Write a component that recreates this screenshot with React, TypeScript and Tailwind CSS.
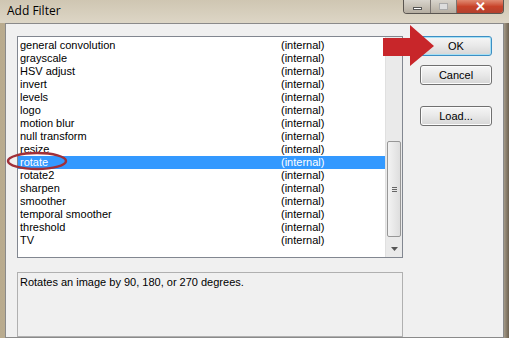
const FILTERS = [
  'general convolution',
  'grayscale',
  'HSV adjust',
  'invert',
  'levels',
  'logo',
  'motion blur',
  'null transform',
  'resize',
  'rotate',
  'rotate2',
  'sharpen',
  'smoother',
  'temporal smoother',
  'threshold',
  'TV',
]

const SELECTED = 'rotate'

function WinButton({ label, primary }: { label: string; primary?: boolean }) {
  return (
    <button
      className={`block w-[72px] h-[20px] rounded-[3px] border text-[11px] text-black bg-gradient-to-b from-[#f6f6f6] via-[#e8e8e8] to-[#d6d6d6] ${
        primary ? 'border-[#3c8fc4] shadow-[inset_0_0_0_1px_#a6e0f5]' : 'border-[#707070] shadow-[inset_0_0_0_1px_#fcfcfc]'
      }`}
    >
      {label}
    </button>
  )
}

export default function App() {
  return (
    <div
      className="relative w-[509px] h-[338px] overflow-hidden bg-gradient-to-r from-[#b9ab8e] via-[#d9d2c2] to-[#c9bea5]"
      style={{ fontFamily: '"Liberation Sans", Arial, sans-serif' }}
    >
      {/* title bar */}
      <div className="relative h-[23px] flex items-start">
        <div className="absolute inset-x-0 top-0 h-[23px] bg-gradient-to-b from-[#cfc6b2] to-[#ddd6c6]" />
        <span
          className="relative ml-[7px] mt-[2px] text-[12px] text-black"
          style={{ fontFamily: '"Open Sans", "Noto Sans", sans-serif' }}
        >
          Add Filter
        </span>
        <div className="relative ml-auto mr-[5px] flex h-[14px] rounded-b-[4px] border border-t-0 border-[#5a5550] overflow-hidden">
          <div className="w-[27px] flex items-center justify-center bg-gradient-to-b from-[#d8d4cc] to-[#b5ada0] border-r border-[#7a7470]">
            <div className="w-[9px] h-[3px] mt-[4px] bg-white border border-[#555]" />
          </div>
          <div className="w-[26px] flex items-center justify-center bg-gradient-to-b from-[#d8d4cc] to-[#b5ada0] border-r border-[#7a7470]">
            <div className="w-[9px] h-[7px] border border-[#aaa] bg-[#ddd]" />
          </div>
          <div className="w-[46px] flex items-center justify-center bg-gradient-to-b from-[#e08a72] via-[#c8432a] to-[#b3402d] text-white text-[13px] font-bold leading-none">
            ✕
          </div>
        </div>
      </div>

      {/* client area */}
      <div className="mx-[5px] h-[315px] bg-[#f0f0f0] border border-[#8a8a8a] flex pl-[11px] pt-[12px]">
        <div className="flex flex-col w-[386px]">
          <div className="h-[222px] bg-white border border-[#828790] flex">
            <div className="flex-1 pt-[2px]">
              {FILTERS.map(f => {
                const sel = f === SELECTED
                return (
                  <div
                    key={f}
                    className={`flex h-[13px] items-center text-[11px] leading-[13px] ${
                      sel ? 'bg-[#3399ff] text-white' : 'text-black'
                    }`}
                  >
                    <span className="w-[263px] pl-[2px]">{f}</span>
                    <span>(internal)</span>
                  </div>
                )
              })}
            </div>
            <div className="w-[17px] bg-[#eaeaea] border-l border-[#e0e0e0] flex flex-col">
              <div className="h-[16px]" />
              <div className="flex-1 pt-[88px] px-[1px]">
                <div className="h-[96px] rounded-[2px] border border-[#979797] bg-gradient-to-r from-[#f3f3f3] to-[#dedede] flex items-center justify-center">
                  <div className="flex flex-col gap-[1px]">
                    <div className="w-[5px] h-px bg-[#666]" />
                    <div className="w-[5px] h-px bg-[#666]" />
                    <div className="w-[5px] h-px bg-[#666]" />
                  </div>
                </div>
              </div>
              <div className="h-[17px] flex items-center justify-center">
                <svg width="7" height="4" viewBox="0 0 7 4">
                  <polygon points="0,0 7,0 3.5,4" fill="#555" />
                </svg>
              </div>
            </div>
          </div>
          <div className="mt-[14px] h-[65px] border border-[#b0b0b0] bg-[#f0f0f0] px-[2px] pt-[1px] text-[11px] text-black">
            Rotates an image by 90, 180, or 270 degrees.
          </div>
        </div>

        <div className="ml-[17px] flex flex-col">
          <WinButton label="OK" primary />
          <div className="mt-[9px]">
            <WinButton label="Cancel" />
          </div>
          <div className="mt-[21px]">
            <WinButton label="Load..." />
          </div>
        </div>
      </div>

      {/* window right frame shadow */}
      <div className="absolute right-0 top-[23px] bottom-0 w-[5px] bg-gradient-to-r from-[#a49a88] to-[#6d6150]" />

      {/* annotation: red arrow */}
      <svg className="absolute left-[382px] top-[24px]" width="56" height="44" viewBox="0 0 56 44">
        <polygon points="1,14 28,14 28,1 52,22 28,42 28,32 1,32" fill="#c8262a" />
      </svg>

      {/* annotation: red ellipse */}
      <svg className="absolute left-[6px] top-[151px]" width="62" height="20" viewBox="0 0 62 20">
        <ellipse cx="31" cy="10" rx="29" ry="8" fill="none" stroke="#a02f38" strokeWidth="2.5" />
      </svg>
    </div>
  )
}
